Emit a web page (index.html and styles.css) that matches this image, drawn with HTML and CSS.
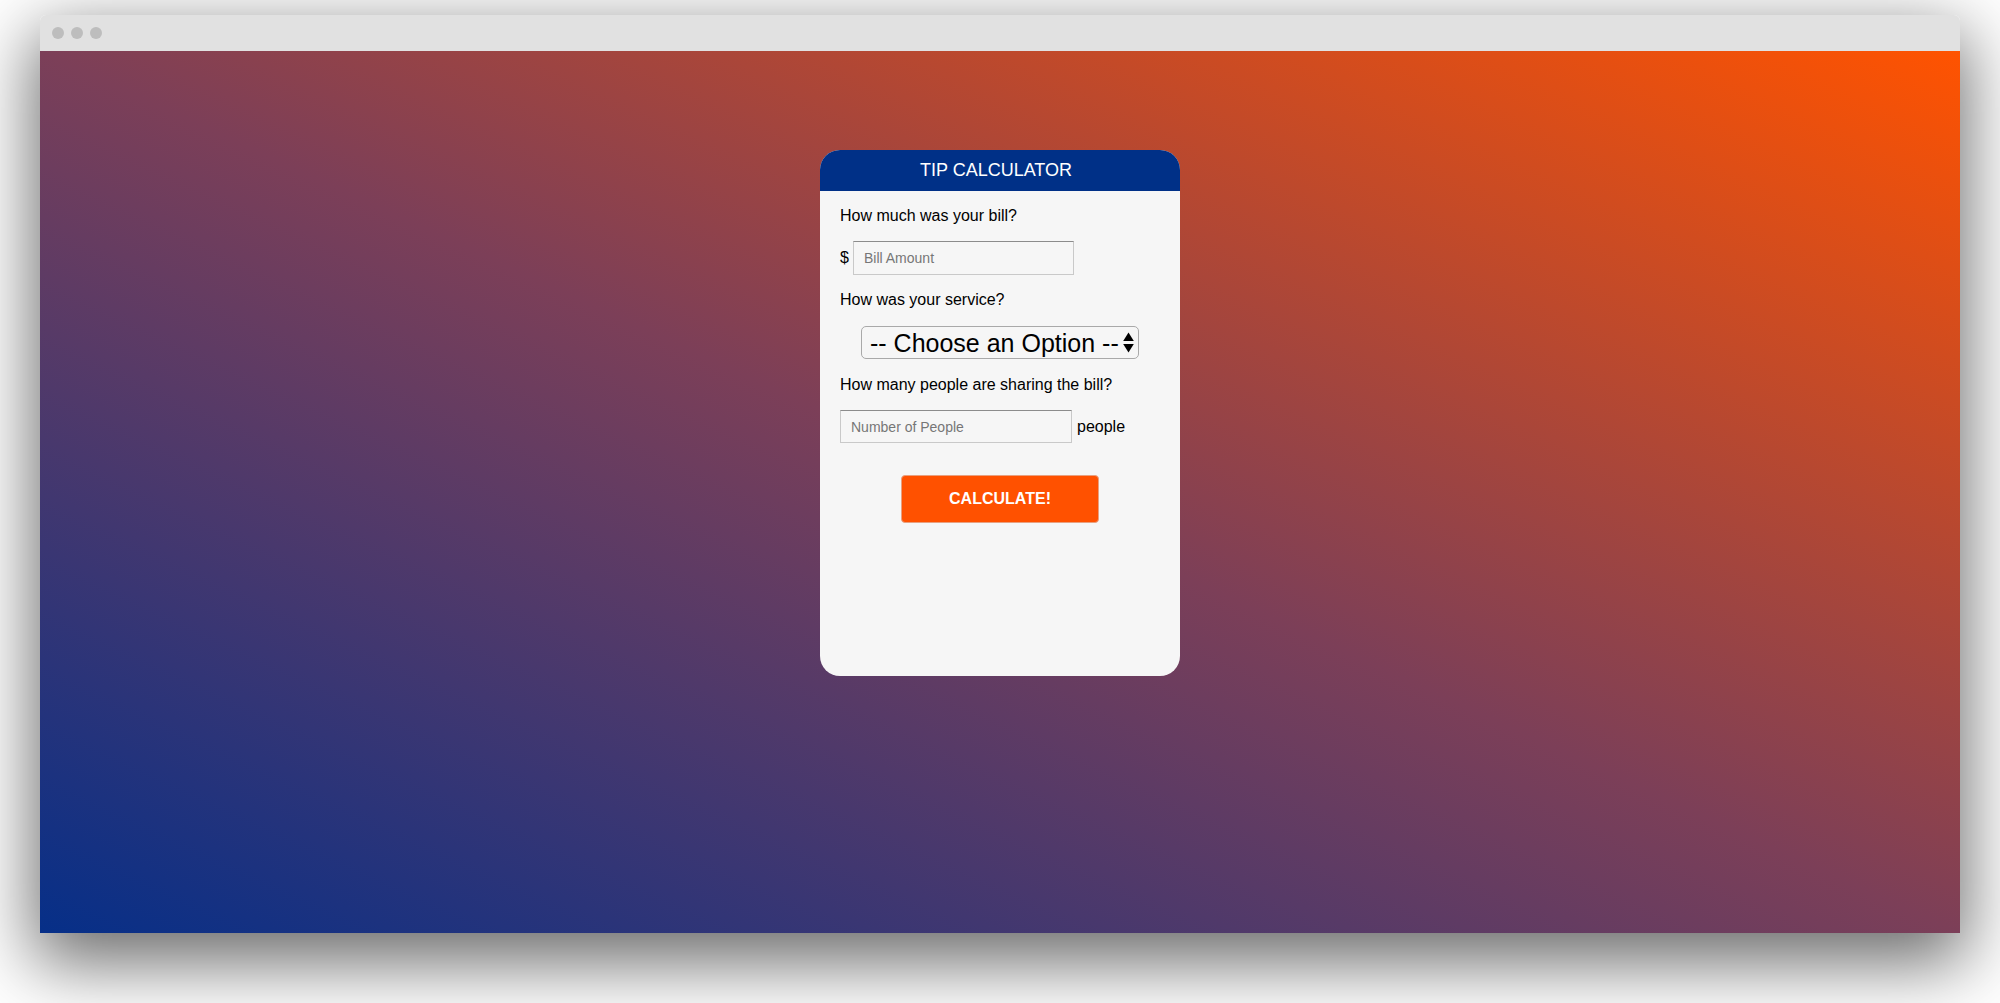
FILE: index.html
```html
<!DOCTYPE html>
<html lang="en">
<head>
<meta charset="utf-8">
<title>Tip Calculator</title>
<link rel="stylesheet" href="styles.css">
</head>
<body>
<div class="window">
  <div class="titlebar">
    <span class="dot"></span><span class="dot"></span><span class="dot"></span>
  </div>
  <div class="viewport">
    <div class="card">
      <div class="card-header">TIP CALCULATOR</div>
      <div class="card-body">
        <p class="label">How much was your bill?</p>
        <div class="row bill-row">
          <span class="currency">$</span>
          <input class="field bill" type="text" placeholder="Bill Amount">
        </div>
        <p class="label label-service">How was your service?</p>
        <div class="select-wrap">
          <div class="select">
            <span class="select-text">-- Choose an Option --</span>
            <svg class="arrows" width="11" height="21" viewBox="0 0 11 21">
              <path d="M5.5 0.5 L10.8 9 L0.2 9 Z" fill="#000"/>
              <path d="M5.5 20.5 L10.8 12 L0.2 12 Z" fill="#000"/>
            </svg>
          </div>
        </div>
        <p class="label label-people">How many people are sharing the bill?</p>
        <div class="row people-row">
          <input class="field people" type="text" placeholder="Number of People">
          <span class="unit">people</span>
        </div>
        <div class="btn-wrap">
          <button class="calc" type="button">CALCULATE!</button>
        </div>
      </div>
    </div>
  </div>
</div>
</body>
</html>
```
FILE: styles.css
```css
html, body {
  margin: 0;
  padding: 0;
  background: #ffffff;
}
body {
  font-family: "Liberation Sans", Arial, Helvetica, sans-serif;
  padding: 15px 40px 0;
  height: 1003px;
  box-sizing: border-box;
  overflow: hidden;
}
.window {
  height: 918px;
  display: flex;
  flex-direction: column;
  border-radius: 6px 6px 0 0;
  box-shadow: 0 24px 70px 6px rgba(0, 0, 0, 0.58);
  overflow: hidden;
}
.titlebar {
  height: 36px;
  background: #e1e1e1;
  display: flex;
  align-items: center;
  gap: 7px;
  padding-left: 12px;
  flex: none;
}
.dot {
  width: 12px;
  height: 12px;
  border-radius: 50%;
  background: #bdbdbd;
}
.viewport {
  flex: 1;
  background: linear-gradient(to top right, #062f88 0%, #7c3f58 50%, #ff5300 100%);
  padding-top: 99px;
}
.card {
  width: 360px;
  height: 526px;
  margin: 0 auto;
  background: #f6f6f6;
  border-radius: 20px;
  overflow: hidden;
  display: flex;
  flex-direction: column;
}
.card-header {
  height: 41px;
  background: #003087;
  color: #ffffff;
  font-size: 18px;
  display: flex;
  align-items: center;
  justify-content: center;
  padding-right: 8px;
  flex: none;
}
.card-body {
  padding: 16px 20px 0;
  display: flex;
  flex-direction: column;
  color: #000;
}
.label {
  margin: 0;
  font-size: 16px;
  line-height: 18px;
}
.row {
  display: flex;
  align-items: center;
  font-size: 16px;
}
.bill-row {
  margin-top: 16px;
  gap: 4px;
}
.currency {
  width: 9px;
}
.field {
  box-sizing: border-box;
  font-family: "Liberation Sans", Arial, Helvetica, sans-serif;
  font-size: 14px;
  background: #f6f6f6;
  border: 1px solid #c9c9c9;
  border-top-color: #8c8c8c;
  padding: 0 10px;
  margin: 0;
  outline: none;
}
.field::placeholder {
  color: #767676;
}
.bill {
  width: 221px;
  height: 34px;
}
.label-service {
  margin-top: 16px;
}
.select-wrap {
  margin-top: 17px;
  display: flex;
  justify-content: center;
}
.select {
  box-sizing: border-box;
  width: 278px;
  height: 33px;
  border: 1px solid #a9a9a9;
  border-radius: 5px;
  background: #f6f6f6;
  display: flex;
  align-items: center;
  justify-content: space-between;
  padding: 0 4px 0 8px;
}
.select-text {
  font-size: 25px;
  line-height: 28px;
  color: #000;
  white-space: nowrap;
}
.arrows {
  display: block;
  flex: none;
}
.label-people {
  margin-top: 17px;
}
.people-row {
  margin-top: 16px;
  gap: 5px;
}
.people {
  width: 232px;
  height: 33px;
}
.unit {
  font-size: 16px;
}
.btn-wrap {
  margin-top: 32px;
  display: flex;
  justify-content: center;
}
.calc {
  width: 198px;
  height: 48px;
  background: #ff5100;
  color: #ffffff;
  border: 1px solid #e8a080;
  border-radius: 4px;
  font-family: "Liberation Sans", Arial, Helvetica, sans-serif;
  font-weight: bold;
  font-size: 16px;
  padding: 0;
  cursor: pointer;
}
```
